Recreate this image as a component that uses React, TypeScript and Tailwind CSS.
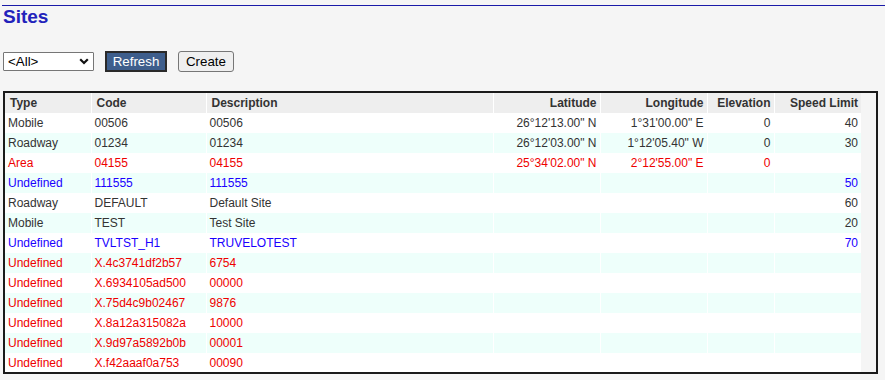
import React from "react";

type Row = {
  type: string;
  code: string;
  desc: string;
  lat?: string;
  lon?: string;
  elev?: string;
  speed?: string;
  c: "n" | "r" | "b";
};

const rows: Row[] = [
  { type: "Mobile", code: "00506", desc: "00506", lat: `26°12'13.00" N`, lon: `1°31'00.00" E`, elev: "0", speed: "40", c: "n" },
  { type: "Roadway", code: "01234", desc: "01234", lat: `26°12'03.00" N`, lon: `1°12'05.40" W`, elev: "0", speed: "30", c: "n" },
  { type: "Area", code: "04155", desc: "04155", lat: `25°34'02.00" N`, lon: `2°12'55.00" E`, elev: "0", speed: "", c: "r" },
  { type: "Undefined", code: "111555", desc: "111555", speed: "50", c: "b" },
  { type: "Roadway", code: "DEFAULT", desc: "Default Site", speed: "60", c: "n" },
  { type: "Mobile", code: "TEST", desc: "Test Site", speed: "20", c: "n" },
  { type: "Undefined", code: "TVLTST_H1", desc: "TRUVELOTEST", speed: "70", c: "b" },
  { type: "Undefined", code: "X.4c3741df2b57", desc: "6754", c: "r" },
  { type: "Undefined", code: "X.6934105ad500", desc: "00000", c: "r" },
  { type: "Undefined", code: "X.75d4c9b02467", desc: "9876", c: "r" },
  { type: "Undefined", code: "X.8a12a315082a", desc: "10000", c: "r" },
  { type: "Undefined", code: "X.9d97a5892b0b", desc: "00001", c: "r" },
  { type: "Undefined", code: "X.f42aaaf0a753", desc: "00090", c: "r" },
];

const colorClass = {
  n: "text-[#333333]",
  r: "text-[#ee0000]",
  b: "text-[#1a00ff]",
};

export default function App() {
  const td = "h-[20px] p-0 px-[3px] leading-[20px] whitespace-nowrap border-r border-white";
  const th = "h-[20px] p-0 pl-[5px] pr-[3px] leading-[20px] font-bold text-[#333333] bg-[#eeeeee] border-r border-white";
  return (
    <div
      className="w-[885px] h-[380px] bg-[#f5f5f5] overflow-hidden pt-[5px]"
      style={{ fontFamily: '"Liberation Sans", Arial, sans-serif' }}
    >
      <div className="ml-[2px] border-t border-[#1a1aa8]">
        <h1 className="pl-[1px] text-[19px] leading-[21px] font-bold text-[#2222bb]">Sites</h1>
      </div>

      <div className="mt-[24px] ml-[3px] flex items-start gap-[11px] h-[22px]">
        <div className="relative w-[91px] h-[19px] mt-[1px]">
          <select className="block appearance-none w-full h-full border border-[#767676] bg-white pl-[4px] py-0 text-[13.33px] leading-[17px] text-black rounded-[1px]">
            <option>&lt;All&gt;</option>
          </select>
          <svg
            className="absolute right-[5px] top-[6px] pointer-events-none"
            width="10"
            height="7"
            viewBox="0 0 10 7"
          >
            <path d="M1.2 1.2 L5 5 L8.8 1.2" fill="none" stroke="#111" strokeWidth="2.2" />
          </svg>
        </div>
        <button className="w-[62px] h-[21px] bg-[#3e5e8c] border-2 border-[#2a2a2a] text-white text-[13.33px] leading-[17px]">
          Refresh
        </button>
        <button className="w-[56px] h-[21px] bg-[#efefef] border border-[#767676] rounded-[3px] text-black text-[13.33px] leading-[19px]">
          Create
        </button>
      </div>

      <div className="mt-[18px] ml-[3px] w-[875px] h-[283px] border-2 border-[#1a1a1a] overflow-hidden">
        <table className="w-[856px] border-collapse table-fixed text-[12px] bg-white">
          <colgroup>
            <col className="w-[86px]" />
            <col className="w-[115px]" />
            <col className="w-[287px]" />
            <col className="w-[107px]" />
            <col className="w-[107px]" />
            <col className="w-[67px]" />
            <col className="w-[87px]" />
          </colgroup>
          <thead>
            <tr>
              <th className={`${th} text-left`}>Type</th>
              <th className={`${th} text-left`}>Code</th>
              <th className={`${th} text-left`}>Description</th>
              <th className={`${th} text-right`}>Latitude</th>
              <th className={`${th} text-right`}>Longitude</th>
              <th className={`${th} text-right`}>Elevation</th>
              <th className={`${th} text-right border-r-0`}>Speed Limit</th>
            </tr>
          </thead>
          <tbody>
            {rows.map((r, i) => (
              <tr key={i} className={`${i % 2 === 1 ? "bg-[#eefffb]" : "bg-white"} ${colorClass[r.c]}`}>
                <td className={`${td} text-left`}>{r.type}</td>
                <td className={`${td} text-left`}>{r.code}</td>
                <td className={`${td} text-left`}>{r.desc}</td>
                <td className={`${td} text-right`}>{r.lat ?? ""}</td>
                <td className={`${td} text-right`}>{r.lon ?? ""}</td>
                <td className={`${td} text-right`}>{r.elev ?? ""}</td>
                <td className={`${td} text-right border-r-0`}>{r.speed ?? ""}</td>
              </tr>
            ))}
          </tbody>
        </table>
      </div>
    </div>
  );
}
